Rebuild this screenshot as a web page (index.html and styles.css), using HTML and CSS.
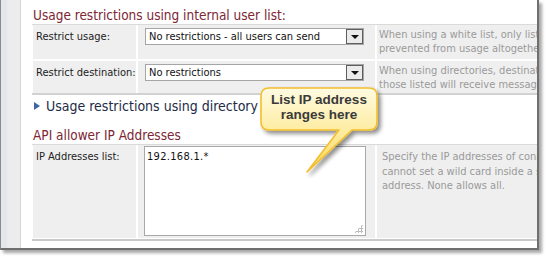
FILE: index.html
```html
<!DOCTYPE html>
<html>
<head>
<meta charset="utf-8">
<link rel="stylesheet" href="styles.css">
</head>
<body>
<div class="frame">
  <div class="rail"></div>
  <div class="content">
    <h2 class="sec-title">Usage restrictions using internal user list:</h2>
    <div class="grid">
      <div class="cell label r1">Restrict usage:</div>
      <div class="cell value r1">
        <div class="select"><span class="sel-text">No restrictions - all users can send</span><span class="sel-btn"><i class="tri"></i></span></div>
      </div>
      <div class="cell desc r1">When using a white list, only listed users can send; others are<br>prevented from usage altogether and see an error</div>

      <div class="cell label r2">Restrict destination:</div>
      <div class="cell value r2">
        <div class="select"><span class="sel-text">No restrictions</span><span class="sel-btn"><i class="tri"></i></span></div>
      </div>
      <div class="cell desc r2">When using directories, destinations are restricted so that only<br>those listed will receive messages from users</div>
    </div>
    <div class="rule"></div>

    <div class="collapsed"><span class="arrow"></span>Usage restrictions using directory</div>

    <h2 class="sec-title api">API allower IP Addresses</h2>
    <div class="grid">
      <div class="cell label r3">IP Addresses list:</div>
      <div class="cell value r3">
        <div class="ta-wrap">
          <textarea class="ta">192.168.1.*</textarea>
          <span class="grip"></span>
        </div>
      </div>
      <div class="cell desc r3">Specify the IP addresses of connecting applications. You<br>cannot set a wild card inside a segment of the IP<br>address. None allows all.</div>
    </div>
    <div class="rule bottom"></div>
  </div>

  <div class="callout">
    <svg class="callout-svg" width="140" height="100" viewBox="0 0 140 100">
      <defs>
        <linearGradient id="cg" x1="0" y1="0" x2="0" y2="1">
          <stop offset="0" stop-color="#fffbe2"/>
          <stop offset="0.55" stop-color="#fdeb9c"/>
          <stop offset="1" stop-color="#f9d55c"/>
        </linearGradient>
        <filter id="sh" x="-20%" y="-20%" width="150%" height="150%">
          <feGaussianBlur in="SourceAlpha" stdDeviation="2"/>
          <feOffset dx="3" dy="3" result="b"/>
          <feComponentTransfer><feFuncA type="linear" slope="0.45"/></feComponentTransfer>
          <feMerge><feMergeNode/><feMergeNode in="SourceGraphic"/></feMerge>
        </filter>
      </defs>
      <path filter="url(#sh)" d="M10 2 H110 Q118 2 118 10 V36 Q118 44 110 44 H93 L48 86 L80 44 H10 Q2 44 2 36 V10 Q2 2 10 2 Z" fill="url(#cg)" stroke="#f3bf2e" stroke-width="1.6" stroke-linejoin="round"/>
    </svg>
    <div class="callout-text">List IP address<br>ranges here</div>
  </div>
</div>
</body>
</html>
```
FILE: styles.css
```css
* { box-sizing: border-box; }
html, body { margin: 0; padding: 0; background: #fff; }
body { width: 549px; height: 259px; overflow: hidden; font-family: "DejaVu Sans Condensed", "DejaVu Sans", sans-serif; }

.frame {
  position: relative;
  width: 539px;
  height: 250px;
  display: flex;
  border-left: 1px solid #8c8c8c;
  border-right: 2px solid #6f6f6f;
  border-bottom: 2px solid #6f6f6f;
  box-shadow: 3px 3px 3px rgba(0,0,0,0.35);
  background: #fff;
}
.rail {
  width: 20px;
  flex: none;
  background: linear-gradient(to right, #e3e6ea 0, #e3e6ea 6px, #ececec 6px);
  border-right: 1px solid #d6d6d6;
}
.content {
  flex: 1;
  overflow: hidden;
  padding-left: 11px;
  padding-top: 6px;
}
.sec-title {
  margin: 0;
  font-size: 13.5px;
  line-height: 18px;
  font-weight: normal;
  color: #7d2634;
  white-space: nowrap;
  padding-left: 1px;
}
.grid {
  display: grid;
  grid-template-columns: 104px 237px 320px;
  column-gap: 2px;
  row-gap: 2px;
  border-top: 1px solid #dadada;
  width: 700px;
}
.cell {
  background: #efefef;
  font-size: 11px;
  line-height: 14px;
}
.label { color: #222; padding: 5px 0 0 3px; white-space: nowrap; margin-left: 1px; }
.value { padding: 3px 0 0 7px; }
.desc { color: #9a9a9a; padding: 3px 0 0 2px; white-space: nowrap; }
.r1 { height: 34px; }
.r2 { height: 32px; }
.r3 { height: 93px; }
.r3.desc { padding: 5px 0 0 5px; line-height: 14.5px; }

.select {
  display: flex;
  width: 219px;
  height: 17px;
  border: 1px solid #a5a5a5;
  background: #fff;
  margin-top: 0px;
}
.sel-text { flex: 1; padding: 1px 0 0 3px; font-size: 11px; line-height: 14px; color: #111; white-space: nowrap; overflow: hidden; }
.sel-btn {
  width: 17px;
  flex: none;
  border: 1px solid #5e5e5e;
  background: #ebebeb;
  display: flex;
  align-items: center;
  justify-content: center;
}
.tri { display: block; width: 0; height: 0; border-left: 4px solid transparent; border-right: 4px solid transparent; border-top: 4px solid #111; margin-top: 1px; }

.rule { height: 2px; background: #d2d2d2; width: 520px; margin-top: 0px; }
.collapsed {
  display: flex;
  align-items: center;
  font-size: 14px;
  line-height: 18px;
  color: #1d2b47;
  padding: 1px 0 0 2px;
  height: 20px;
  margin-top: 0;
  white-space: nowrap;
}
.arrow {
  width: 0; height: 0;
  border-top: 4px solid transparent;
  border-bottom: 4px solid transparent;
  border-left: 6px solid #3d66a8;
  margin-right: 6px;
}
.api { margin-top: 11px; }

.ta-wrap { position: relative; width: 222px; height: 90px; margin-left: -1px; margin-top: -2px; }
.ta {
  display: block;
  width: 222px;
  height: 90px;
  border: 1px solid #a8a8a8;
  resize: none;
  padding: 3px 2px;
  font-family: "DejaVu Sans Condensed", "DejaVu Sans", sans-serif;
  font-size: 11px;
  letter-spacing: 0.3px;
  color: #111;
  background: #fff;
  outline: none;
}
.grip {
  position: absolute;
  right: 3px; bottom: 3px;
  width: 9px; height: 9px;
  background:
    radial-gradient(circle, #bdbdbd 1px, transparent 1.2px) 0 0 / 3px 3px;
  clip-path: polygon(100% 0, 100% 100%, 0 100%);
}
.rule.bottom { margin-top: 1px; background: #c8c8c8; height: 2px; width: 520px; }

.callout { position: absolute; left: 258px; top: 86px; width: 140px; height: 100px; }
.callout-svg { position: absolute; left: 0; top: 0; }
.callout-text {
  position: absolute;
  left: 2px; top: 6px; width: 116px;
  text-align: center;
  font-family: "Liberation Sans", Arial, sans-serif;
  font-weight: bold;
  font-size: 13.5px;
  line-height: 15px;
  color: #3a3a3a;
}
```
